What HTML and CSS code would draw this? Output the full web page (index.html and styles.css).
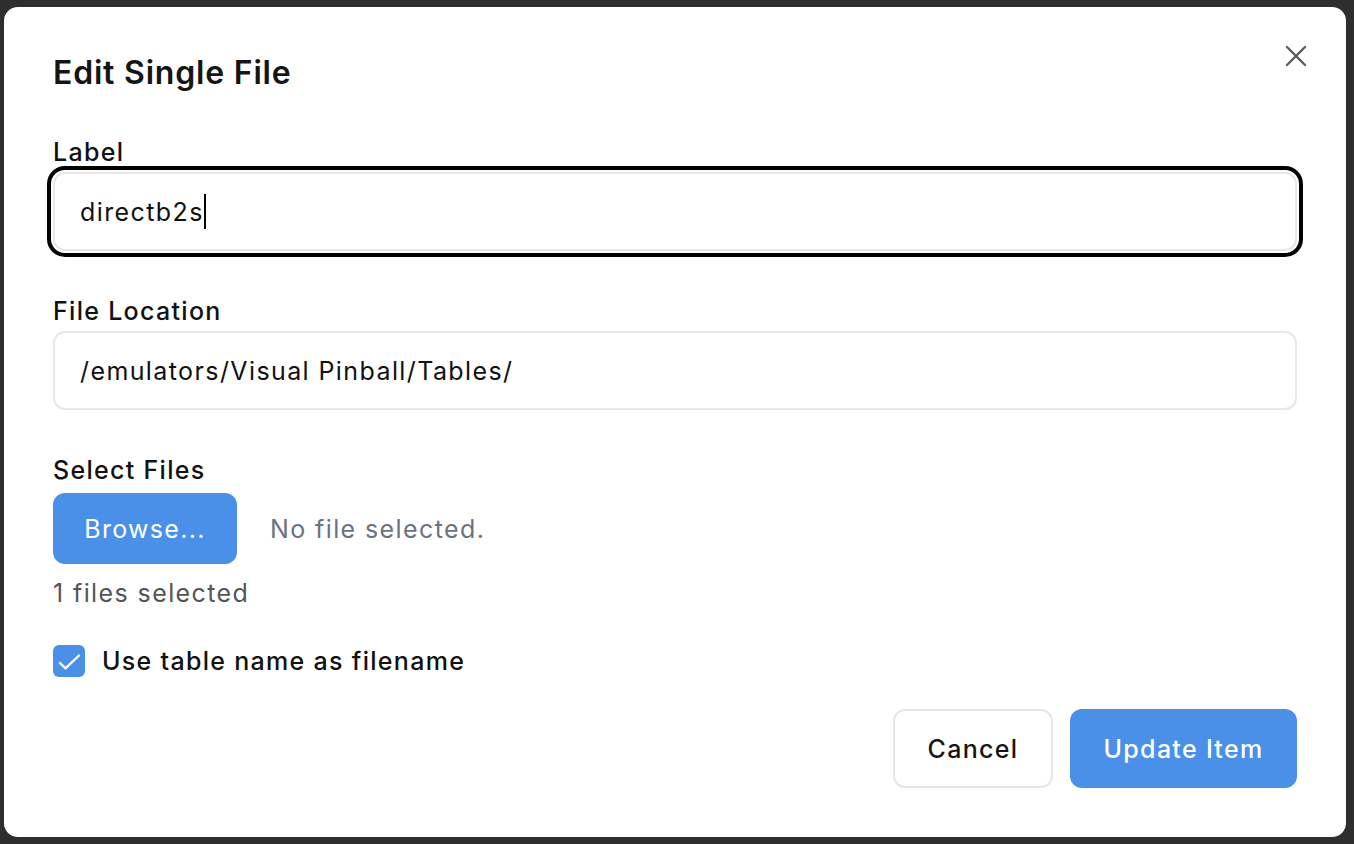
FILE: index.html
```html
<!DOCTYPE html>
<html lang="en">
<head>
<meta charset="utf-8">
<title>Edit Single File</title>
<link rel="stylesheet" href="styles.css">
</head>
<body>
<div class="backdrop">
  <div class="modal">
    <button class="close" aria-label="Close">
      <svg width="22" height="22" viewBox="0 0 22 22"><path d="M2 2 L20 20 M20 2 L2 20" stroke="#555" stroke-width="2.2" stroke-linecap="round" fill="none"/></svg>
    </button>
    <h2 class="title">Edit Single File</h2>

    <div class="field first">
      <div class="label">Label</div>
      <div class="input focused">directb2s<span class="caret"></span></div>
    </div>

    <div class="field">
      <div class="label">File Location</div>
      <div class="input">/emulators/Visual Pinball/Tables/</div>
    </div>

    <div class="field">
      <div class="label">Select Files</div>
      <div class="file-row">
        <button class="btn btn-primary btn-browse">Browse...</button>
        <span class="no-file">No file selected.</span>
      </div>
      <div class="count">1 files selected</div>
    </div>

    <div class="check-row">
      <span class="checkbox">
        <svg width="32" height="32" viewBox="0 0 32 32"><path d="M7 18 L12.5 23.3 L26 10.5" stroke="#fff" stroke-width="2.4" stroke-linecap="round" stroke-linejoin="round" fill="none"/></svg>
      </span>
      <span class="check-label">Use table name as filename</span>
    </div>

    <div class="footer">
      <button class="btn btn-cancel">Cancel</button>
      <button class="btn btn-primary btn-update">Update Item</button>
    </div>
  </div>
</div>
</body>
</html>
```

FILE: styles.css
```css
html, body {
  margin: 0;
  padding: 0;
}
body {
  background: #2e2e2e;
  font-family: Inter, "Noto Sans", "Liberation Sans", sans-serif;
  color: #111;
}
.backdrop {
  width: 1354px;
  height: 844px;
  box-sizing: border-box;
  padding: 7px 8px 7px 4px;
  background: #2e2e2e;
}
.modal {
  position: relative;
  height: 830px;
  box-sizing: border-box;
  background: #fff;
  border-radius: 14px;
  padding: 46px 49px 0 49px;
}
.close {
  position: absolute;
  top: 38px;
  right: 39px;
  width: 22px;
  height: 22px;
  padding: 0;
  border: 0;
  background: transparent;
  display: flex;
}
.title {
  margin: 0;
  font-size: 32px;
  line-height: 40px;
  font-weight: 600;
  color: #151515;
  letter-spacing: 0.8px;
}
.field {
  margin-top: 44px;
}
.field.first {
  margin-top: 43px;
}
.label {
  font-size: 25px;
  line-height: 32px;
  font-weight: 500;
  letter-spacing: 1.3px;
  color: #111;
}
.input {
  margin-top: 4px;
  height: 79px;
  box-sizing: border-box;
  border: 2px solid #e7e7e7;
  border-radius: 12px;
  padding: 0 25px;
  display: flex;
  align-items: center;
  font-size: 25px;
  letter-spacing: 1.4px;
  color: #111;
}
.input.focused {
  outline: 4px solid #000;
  outline-offset: 2px;
}
.caret {
  display: inline-block;
  width: 2px;
  height: 35px;
  background: #000;
  margin-left: 0;
}
.file-row {
  margin-top: 7px;
  display: flex;
  align-items: center;
  gap: 33px;
}
.btn {
  font-family: inherit;
  font-size: 25px;
  font-weight: 500;
  letter-spacing: 1.3px;
  border-radius: 12px;
  cursor: pointer;
  padding: 0;
}
.btn-primary {
  background: #4a90e8;
  color: #fff;
  border: 0;
}
.btn-browse {
  width: 184px;
  height: 71px;
  font-weight: 400;
}
.no-file {
  font-size: 25px;
  letter-spacing: 1.4px;
  color: #6b7280;
}
.count {
  margin-top: 13px;
  font-size: 25px;
  line-height: 32px;
  letter-spacing: 1.4px;
  color: #555;
}
.check-row {
  margin-top: 36px;
  display: flex;
  align-items: center;
  gap: 17px;
  height: 32px;
}
.checkbox {
  width: 32px;
  height: 32px;
  border-radius: 6px;
  background: #4a90e8;
  display: flex;
}
.check-label {
  font-size: 25px;
  font-weight: 500;
  letter-spacing: 1.3px;
  color: #111;
}
.footer {
  margin-top: 32px;
  display: flex;
  justify-content: flex-end;
  gap: 17px;
}
.btn-cancel {
  width: 160px;
  height: 79px;
  background: #fff;
  border: 2px solid #e6e6e6;
  color: #151515;
}
.btn-update {
  width: 227px;
  height: 79px;
}
```
